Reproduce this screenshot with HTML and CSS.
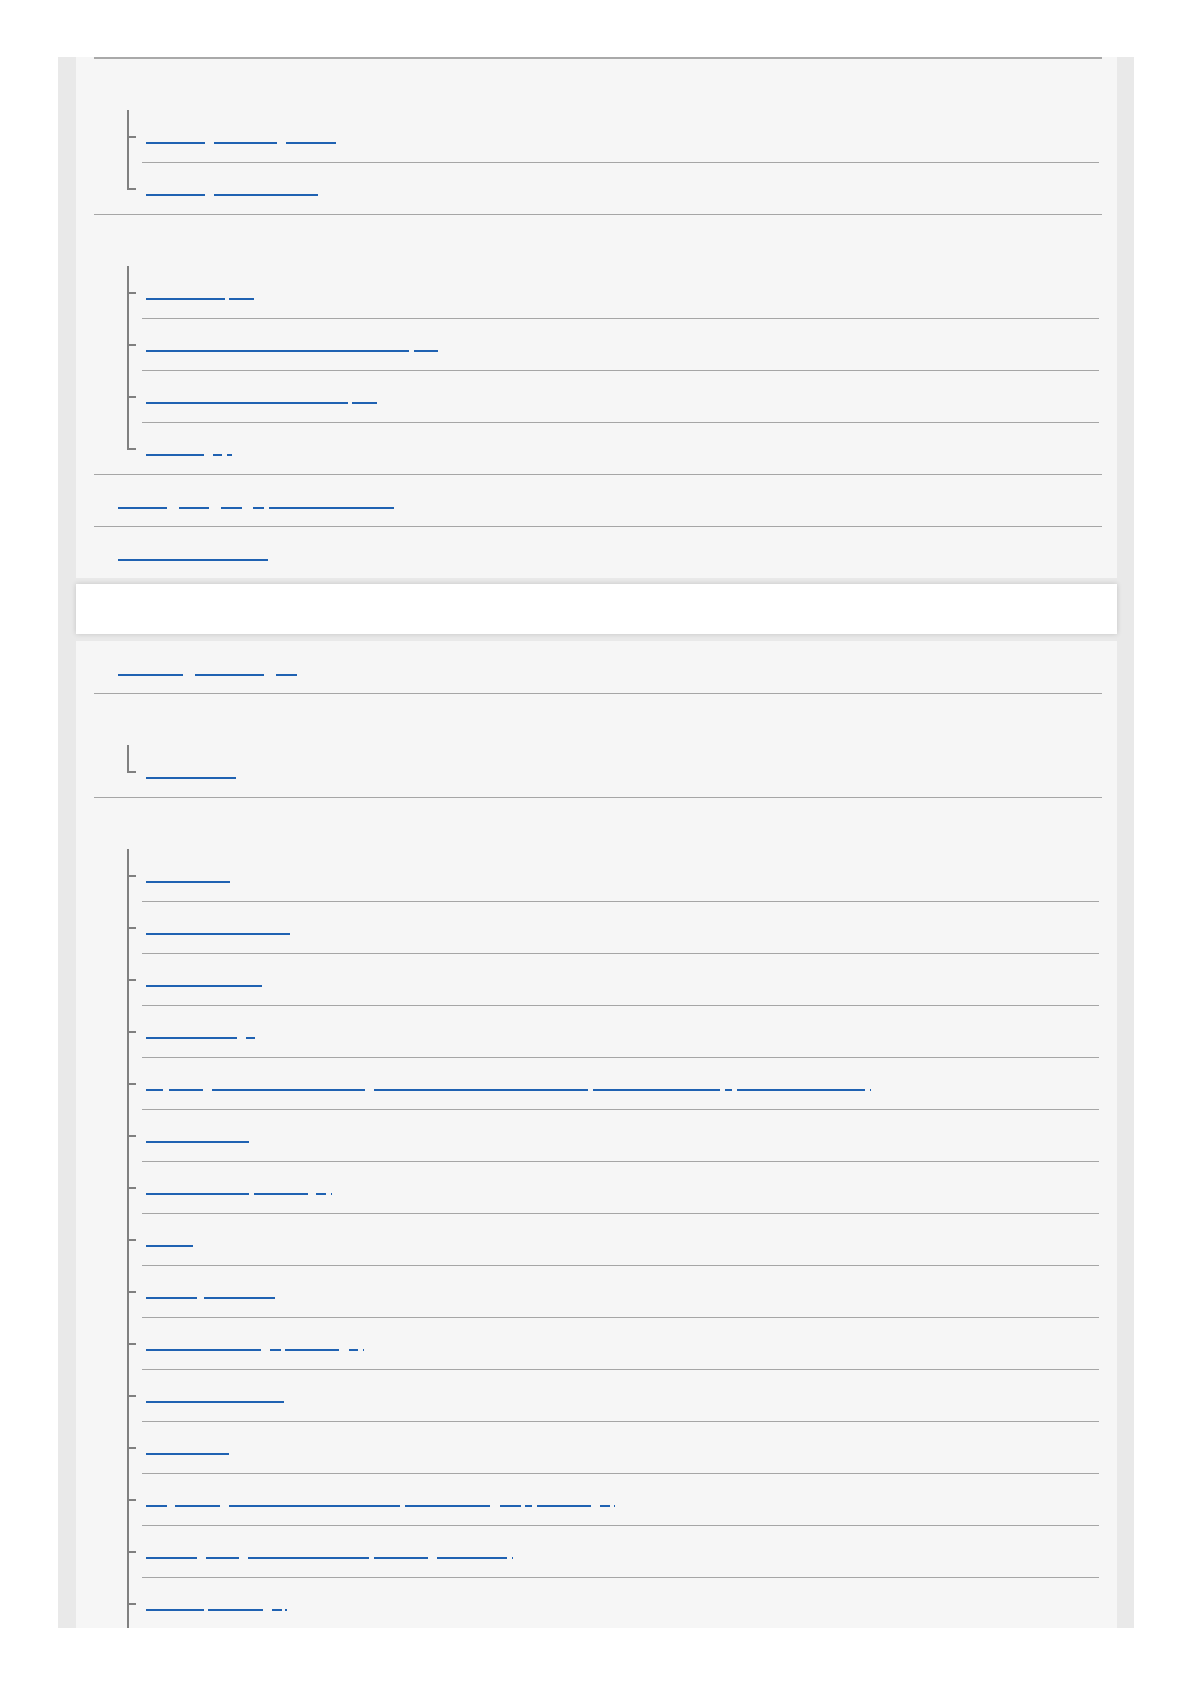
FILE: index.html
```html
<!DOCTYPE html>
<html lang="en">
<head>
<meta charset="utf-8">
<title>Help Guide</title>
<link rel="stylesheet" href="styles.css">
</head>
<body>
<div class="col">
  <section class="panel cont">
    <ul class="list">
      <li class="row grp">
        <div class="ttl">Shooting movies</div>
        <ul class="tree">
          <li class="node"><a class="lk" href="#"><span class="w" style="--w:59px">Shooting</span><span class="w" style="--w:63px;--g:9px">movies</span><span class="w" style="--w:50px;--g:9px">easily</span></a></li>
          <li class="node"><a class="lk" href="#"><span class="w" style="--w:59px">Picture</span><span class="w" style="--w:104px;--g:9px">Profile settings</span></a></li>
        </ul>
      </li>
      <li class="row grp">
        <div class="ttl">Using shooting functions</div>
        <ul class="tree">
          <li class="node"><a class="lk" href="#"><span class="w" style="--w:79px">Image Quality</span><span class="w" style="--w:25px;--g:4px">JPG</span></a></li>
          <li class="node"><a class="lk" href="#"><span class="w" style="--w:263px">Recording format and file settings for movies</span><span class="w" style="--w:24px;--g:5px">4K</span></a></li>
          <li class="node"><a class="lk" href="#"><span class="w" style="--w:202px">Selecting the recording frame rate</span><span class="w" style="--w:25px;--g:4px">fps</span></a></li>
          <li class="node"><a class="lk" href="#"><span class="w" style="--w:58px">Proxy</span><span class="w" style="--w:9px;--g:9px">R</span><span class="w" style="--w:5px;--g:5px">.</span></a></li>
        </ul>
      </li>
      <li class="row"><a class="lk" href="#"><span class="w" style="--w:49px">Using</span><span class="w" style="--w:30px;--g:12px">the</span><span class="w" style="--w:21px;--g:12px">Wi</span><span class="w" style="--w:11px;--g:11px">Fi</span><span class="w" style="--w:125px;--g:5px">with a smartphone</span></a></li>
      <li class="row"><a class="lk" href="#"><span class="w" style="--w:150px">Computer and software</span></a></li>
    </ul>
  </section>

  <div class="bar">Troubleshooting</div>

  <section class="panel">
    <ul class="list">
      <li class="row"><a class="lk" href="#"><span class="w" style="--w:65px">Shooting</span><span class="w" style="--w:69px;--g:12px">Settings</span><span class="w" style="--w:21px;--g:12px">Top</span></a></li>
      <li class="row grp">
        <div class="ttl">Shooting mode</div>
        <ul class="tree">
          <li class="node"><a class="lk" href="#"><span class="w" style="--w:90px">Mode Dial</span></a></li>
        </ul>
      </li>
      <li class="row grp">
        <div class="ttl">Image quality and recording</div>
        <ul class="tree more">
          <li class="node"><a class="lk" href="#"><span class="w" style="--w:84px">Image Size</span></a></li>
          <li class="node"><a class="lk" href="#"><span class="w" style="--w:144px">Aspect Ratio settings</span></a></li>
          <li class="node"><a class="lk" href="#"><span class="w" style="--w:116px">File Format</span></a></li>
          <li class="node"><a class="lk" href="#"><span class="w" style="--w:91px">RAW File</span><span class="w" style="--w:9px;--g:9px">T</span></a></li>
          <li class="node"><a class="lk" href="#"><span class="w" style="--w:17px">Lo</span><span class="w" style="--w:34px;--g:6px">ng</span><span class="w" style="--w:153px;--g:9px">Exposure Noise Reduction</span><span class="w" style="--w:214px;--g:9px">and High ISO Noise Reduction</span><span class="w" style="--w:127px;--g:5px">for still images</span><span class="w" style="--w:7px;--g:5px">(</span><span class="w" style="--w:128px;--g:5px">Shooting mode</span><span class="w" style="--w:1px;--g:5px"></span></a></li>
          <li class="node"><a class="lk" href="#"><span class="w" style="--w:103px">Color Space</span></a></li>
          <li class="node"><a class="lk" href="#"><span class="w" style="--w:103px">Lens Correction</span><span class="w" style="--w:54px;--g:5px">settings</span><span class="w" style="--w:10px;--g:8px">P</span><span class="w" style="--w:1px;--g:5px"></span></a></li>
          <li class="node"><a class="lk" href="#"><span class="w" style="--w:47px">Rating</span></a></li>
          <li class="node"><a class="lk" href="#"><span class="w" style="--w:51px">Media</span><span class="w" style="--w:71px;--g:7px">Settings</span></a></li>
          <li class="node"><a class="lk" href="#"><span class="w" style="--w:115px">Recording Media</span><span class="w" style="--w:11px;--g:9px">S</span><span class="w" style="--w:54px;--g:4px">ettings</span><span class="w" style="--w:9px;--g:10px">1</span><span class="w" style="--w:1px;--g:5px"></span></a></li>
          <li class="node"><a class="lk" href="#"><span class="w" style="--w:138px">Auto Switch Media</span></a></li>
          <li class="node"><a class="lk" href="#"><span class="w" style="--w:83px">File Name</span></a></li>
          <li class="node"><a class="lk" href="#"><span class="w" style="--w:21px">Se</span><span class="w" style="--w:45px;--g:8px">tting</span><span class="w" style="--w:171px;--g:9px">the folder and file name</span><span class="w" style="--w:85px;--g:5px">format for</span><span class="w" style="--w:21px;--g:10px">still</span><span class="w" style="--w:7px;--g:4px">i</span><span class="w" style="--w:54px;--g:5px">mages</span><span class="w" style="--w:10px;--g:9px">J</span><span class="w" style="--w:1px;--g:4px"></span></a></li>
          <li class="node"><a class="lk" href="#"><span class="w" style="--w:51px">Setting</span><span class="w" style="--w:33px;--g:9px">the</span><span class="w" style="--w:121px;--g:9px">IPTC information</span><span class="w" style="--w:54px;--g:5px">for the</span><span class="w" style="--w:70px;--g:9px">images</span><span class="w" style="--w:1px;--g:5px"></span></a></li>
          <li class="node"><a class="lk" href="#"><span class="w" style="--w:58px">Write</span><span class="w" style="--w:55px;--g:4px">Serial</span><span class="w" style="--w:10px;--g:9px">N</span><span class="w" style="--w:2px;--g:3px"></span></a></li>
        </ul>
      </li>
    </ul>
  </section>
</div>
</body>
</html>
```

FILE: styles.css
```css
* {
  box-sizing: border-box;
}

body {
  margin: 0;
  background: #ffffff;
  font-family: "Liberation Sans", Arial, sans-serif;
  font-size: 14px;
}

.col {
  width: 1076px;
  height: 1571px;
  margin: 57px 0 0 58px;
  padding: 0 17px 0 18px;
  background: #e9e9e9;
  overflow: hidden;
}

.panel {
  background: #f6f6f6;
  padding: 0 15px 0 18px;
}

.list,
.tree {
  list-style: none;
  margin: 0;
  padding: 0;
}

.row {
  border-top: 1px solid #a6a6a6;
}

.row:not(.grp) {
  height: 52px;
}

.panel > .list > .row:first-child {
  border-top-color: transparent;
}

.panel.cont > .list > .row:first-child {
  border-top: 2px solid #a9a9a9;
}

.row > .lk {
  margin: 14px 0 0 24px;
}

.ttl {
  height: 51px;
  padding: 14px 0 0 24px;
  line-height: 20px;
  color: transparent;
}

.tree {
  margin: 0 3px 0 33px;
}

.tree.more {
  padding-bottom: 20px;
}

.node {
  position: relative;
  height: 52px;
  margin-left: 15px;
  padding: 13px 0 0 4px;
  border-top: 1px solid #a6a6a6;
}

.node:first-child {
  border-top-color: transparent;
}

.node::before {
  content: "";
  position: absolute;
  left: -15px;
  top: -1px;
  bottom: 0;
  width: 2px;
  background: #808080;
}

.node:last-child::before {
  bottom: auto;
  height: 28px;
}

.tree.more .node:last-child::before {
  height: auto;
  bottom: -20px;
}

.node::after {
  content: "";
  position: absolute;
  left: -15px;
  top: 25px;
  width: 9px;
  height: 2px;
  background: #808080;
}

.lk {
  display: flex;
  height: 20px;
  text-decoration: none;
}

.w {
  flex: none;
  display: block;
  width: var(--w);
  margin-left: var(--g, 0px);
  height: 20px;
  border-bottom: 2px solid #1f62b2;
  color: transparent;
  white-space: nowrap;
  font-size: 12px;
  line-height: 18px;
}

.bar {
  height: 50px;
  margin: 6px 0 7px;
  background: #ffffff;
  box-shadow: 0 0 5px rgba(0, 0, 0, 0.16);
  color: transparent;
  padding: 15px 24px;
  line-height: 20px;
}
```
